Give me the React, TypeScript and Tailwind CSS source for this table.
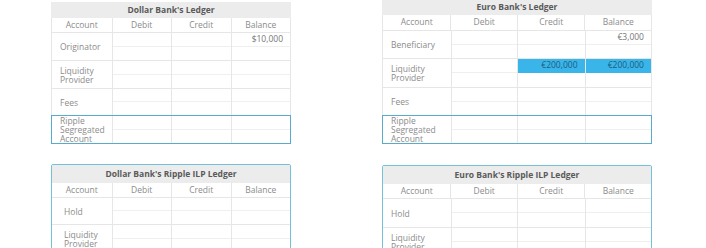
type Row = {
  name: string[];
  values?: (string | null)[];
  blue?: boolean[];
  ripple?: boolean;
  h: number;
};

type LedgerProps = {
  title: string;
  cols: number[];
  titleH: number;
  headH: number;
  rows: Row[];
  framed?: boolean;
  padL: number;
};

const font = { fontFamily: '"Open Sans", "Liberation Sans", sans-serif' };

function Ledger({ title, cols, titleH, headH, rows, framed, padL }: LedgerProps) {
  const outer = framed
    ? 'border-[1.5px] border-[#74c2d8] rounded-[2px] overflow-hidden'
    : '';
  return (
    <div className={`flex flex-col bg-white ${outer}`} style={font}>
      <div
        className="flex items-center justify-center bg-[#ececec] text-[8.5px] font-bold text-[#5a5a5a]"
        style={{ height: titleH }}
      >
        {title}
      </div>
      <div
        className={`flex text-[8.5px] text-[#8c8c8c] ${framed ? '' : 'border-x border-[#e6e6e6]'}`}
        style={{ height: headH }}
      >
        {['Account', 'Debit', 'Credit', 'Balance'].map((h, i) => (
          <div
            key={h}
            className={`flex items-center justify-center ${i > 0 ? 'border-l border-[#e6e6e6]' : ''}`}
            style={{ width: cols[i] }}
          >
            {h}
          </div>
        ))}
      </div>
      {rows.map((r, ri) => (
        <div
          key={ri}
          className={`flex ${
            r.ripple
              ? 'border-[1.5px] border-[#58abc9]'
              : `border-t border-[#e6e6e6] ${framed ? '' : 'border-x'}`
          }`}
          style={{ height: r.h }}
        >
          <div
            className="flex flex-col justify-center text-[8.5px] leading-[9px] text-[#8c8c8c]"
            style={{ width: cols[0], paddingLeft: padL }}
          >
            {r.name.map((n) => (
              <span key={n}>{n}</span>
            ))}
          </div>
          {[1, 2, 3].map((c) => (
            <div key={c} className="flex flex-col border-l border-[#e6e6e6]" style={{ width: cols[c] }}>
              <div
                className={`flex h-1/2 items-center justify-end border-b pr-[7px] text-[8.5px] ${
                  r.blue && r.blue[c]
                    ? 'border-[#3ab5ea] bg-[#3ab5ea] text-[#1d5c80]'
                    : 'border-[#efefef] text-[#777]'
                }`}
              >
                {r.values ? r.values[c] : null}
              </div>
              <div className="flex-1" />
            </div>
          ))}
        </div>
      ))}
    </div>
  );
}

const ripple = ['Ripple', 'Segregated', 'Account'];
const liquidity = ['Liquidity', 'Provider'];

export default function App() {
  const dollarCols = [60, 60, 60, 60];
  const euroCols = [68, 67, 68, 67];

  return (
    <div className="flex h-[248px] w-[706px] overflow-hidden bg-white">
      <div className="ml-[51px] flex w-[240px] flex-col pt-[2px]">
        <Ledger
          title="Dollar Bank's Ledger"
          cols={dollarCols}
          titleH={16}
          headH={14}
          padL={8}
          rows={[
            { name: ['Originator'], values: [null, null, null, '$10,000'], h: 28 },
            { name: liquidity, h: 28 },
            { name: ['Fees'], h: 27 },
            { name: ripple, ripple: true, h: 29 },
          ]}
        />
        <div className="mt-[20px]">
          <Ledger
            title="Dollar Bank's Ripple ILP Ledger"
            cols={dollarCols}
            titleH={18}
            headH={14}
            padL={12}
            framed
            rows={[
              { name: ['Hold'], h: 27 },
              { name: liquidity, h: 28 },
            ]}
          />
        </div>
      </div>
      <div className="ml-[91px] flex w-[270px] flex-col">
        <Ledger
          title="Euro Bank's Ledger"
          cols={euroCols}
          titleH={15}
          headH={15}
          padL={8}
          rows={[
            { name: ['Beneficiary'], values: [null, null, null, '€3,000'], h: 28 },
            {
              name: liquidity,
              values: [null, null, '€200,000', '€200,000'],
              blue: [false, false, true, true],
              h: 29,
            },
            { name: ['Fees'], h: 28 },
            { name: ripple, ripple: true, h: 29 },
          ]}
        />
        <div className="mt-[21px]">
          <Ledger
            title="Euro Bank's Ripple ILP Ledger"
            cols={euroCols}
            titleH={18}
            headH={14}
            padL={8}
            framed
            rows={[
              { name: ['Hold'], h: 29 },
              { name: liquidity, h: 28 },
            ]}
          />
        </div>
      </div>
    </div>
  );
}
